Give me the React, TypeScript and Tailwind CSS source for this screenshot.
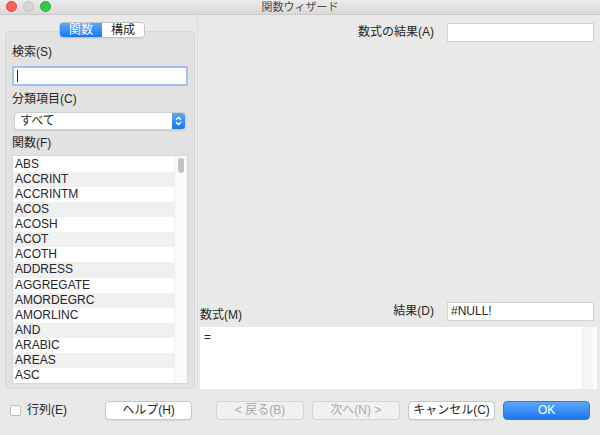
import React from 'react';

const FONT = { fontFamily: '"Liberation Sans", "Noto Sans CJK JP", sans-serif' };

const FUNCTIONS = [
  'ABS', 'ACCRINT', 'ACCRINTM', 'ACOS', 'ACOSH', 'ACOT', 'ACOTH', 'ADDRESS',
  'AGGREGATE', 'AMORDEGRC', 'AMORLINC', 'AND', 'ARABIC', 'AREAS', 'ASC',
];

const Button: React.FC<{ label: string; disabled?: boolean; primary?: boolean }> = ({ label, disabled, primary }) => {
  if (primary) {
    return (
      <div className="w-[87px] h-[19px] rounded-[4px] bg-gradient-to-b from-[#5aa7fa] to-[#1677f0] border border-[#2a7ce0] flex items-center justify-center text-[12px] text-white">
        {label}
      </div>
    );
  }
  return (
    <div
      className={`w-[88px] h-[19px] rounded-[4px] border flex items-center justify-center text-[12px] ${
        disabled
          ? 'bg-[#f1f1f1] border-[#d3d3d3] text-[#a9a9a9]'
          : 'bg-white border-[#c6c6c6] text-[#262626] shadow-[0_1px_0_rgba(0,0,0,0.06)]'
      }`}
    >
      {label}
    </div>
  );
};

export default function App() {
  return (
    <div className="w-[600px] h-[435px] bg-[#e9e9e9] flex flex-col overflow-hidden text-[#262626]" style={FONT}>
      {/* title bar */}
      <div className="h-[15px] bg-gradient-to-b from-[#ebebeb] to-[#d9d9d9] border-b border-[#c8c8c8] flex items-center relative">
        <div className="flex items-center gap-[6px] pl-[6px]">
          <div className="w-[11px] h-[11px] rounded-full bg-[#fc605c] border border-[#e0443e]" />
          <div className="w-[11px] h-[11px] rounded-full bg-[#d4d4d4] border border-[#c4c4c4]" />
          <div className="w-[11px] h-[11px] rounded-full bg-[#34c84a] border border-[#2aab3c]" />
        </div>
        <div className="absolute inset-0 flex items-center justify-center text-[11px] text-[#4a4a4a]">関数ウィザード</div>
      </div>

      <div className="flex flex-1">
        {/* left column */}
        <div className="w-[195px] pl-[5px] pt-[7px] flex flex-col">
          <div className="flex justify-center relative z-10 pl-[4px]">
            <div className="flex h-[16px] rounded-[4px] overflow-hidden border border-[#c4c4c4] shadow-[0_1px_0_rgba(0,0,0,0.05)] text-[12px]">
              <div className="w-[42px] bg-gradient-to-b from-[#5aa7fa] to-[#1677f0] text-white flex items-center justify-center">関数</div>
              <div className="w-[42px] bg-white flex items-center justify-center">構成</div>
            </div>
          </div>
          <div className="-mt-[7px] h-[358px] bg-[#e2e2e2] border border-[#d8d8d8] rounded-[4px] pt-[12px] pl-[6px] pr-[6px] flex flex-col">
            <div className="h-[16px] leading-[16px] text-[12px]">検索(S)</div>
            <div className="mt-[6px] h-[20px] bg-white border-2 border-[#9fc3ee] rounded-[2px] flex items-center pl-[3px]">
              <div className="w-[1px] h-[12px] bg-[#222]" />
            </div>
            <div className="mt-[5px] h-[16px] leading-[16px] text-[12px]">分類項目(C)</div>
            <div className="mt-[5px] mx-[2px] h-[18px] bg-white rounded-[4px] border border-[#cfcfcf] flex items-center shadow-[0_1px_1px_rgba(0,0,0,0.08)]">
              <span className="flex-1 pl-[5px] text-[12px]">すべて</span>
              <div className="w-[13px] h-[16px] rounded-r-[3px] bg-gradient-to-b from-[#5aa7fa] to-[#1677f0] flex items-center justify-center">
                <svg width="7" height="10" viewBox="0 0 7 10" fill="none" stroke="white" strokeWidth="1.3">
                  <path d="M1 3.8 L3.5 1.5 L6 3.8" />
                  <path d="M1 6.2 L3.5 8.5 L6 6.2" />
                </svg>
              </div>
            </div>
            <div className="mt-[5px] h-[16px] leading-[16px] text-[12px]">関数(F)</div>
            <div className="mt-[4px] h-[229px] bg-white border border-[#d6d6d6] flex overflow-hidden">
              <div className="flex-1 flex flex-col pt-[1px]">
                {FUNCTIONS.map((f, i) => (
                  <div
                    key={f}
                    className={`h-[15.1px] leading-[15.1px] pl-[2px] text-[12px] shrink-0 ${i % 2 === 1 ? 'bg-[#f0f0f0]' : 'bg-white'}`}
                  >
                    {f}
                  </div>
                ))}
              </div>
              <div className="w-[13px] bg-[#fafafa] border-l border-[#ececec] flex justify-center pt-[2px]">
                <div className="w-[6px] h-[15px] rounded-full bg-[#c2c2c2]" />
              </div>
            </div>
          </div>
        </div>

        {/* right column */}
        <div className="flex-1 ml-[2px] pl-[2px] pr-[3px] border-l border-[#dcdcdc] flex flex-col">
          <div className="pt-[8px] pr-[3px] flex items-center justify-end gap-[13px]">
            <span className="text-[12px]">数式の結果(A)</span>
            <div className="w-[147px] h-[19px] bg-white border border-[#d2d2d2]" />
          </div>
          <div className="flex-1" />
          <div className="flex items-end justify-between pr-[3px]">
            <span className="text-[12px] leading-[14px] mb-[-1px]">数式(M)</span>
            <div className="flex items-center gap-[13px]">
              <span className="text-[12px]">結果(D)</span>
              <div className="w-[147px] h-[19px] bg-white border border-[#d2d2d2] text-[12px] leading-[17px] pl-[3px]">#NULL!</div>
            </div>
          </div>
          <div className="mt-[6px] h-[62px] bg-white flex">
            <div className="flex-1 pl-[4px] pt-[1px] text-[12px]">=</div>
            <div className="w-[12px] bg-[#f6f6f6] border-l border-[#ececec] mr-[3px]" />
          </div>
        </div>
      </div>

      {/* bottom bar */}
      <div className="h-[47px] flex items-center pl-[10px] pr-[10px] pb-[3px]">
        <div className="flex items-center gap-[6px] w-[95px]">
          <div className="w-[11px] h-[11px] bg-white border border-[#bdbdbd] rounded-[2px]" />
          <span className="text-[12px]">行列(E)</span>
        </div>
        <Button label="ヘルプ(H)" />
        <div className="w-[24px]" />
        <Button label="< 戻る(B)" disabled />
        <div className="w-[8px]" />
        <Button label="次へ(N) >" disabled />
        <div className="w-[8px]" />
        <Button label="キャンセル(C)" />
        <div className="w-[8px]" />
        <Button label="OK" primary />
      </div>
    </div>
  );
}
